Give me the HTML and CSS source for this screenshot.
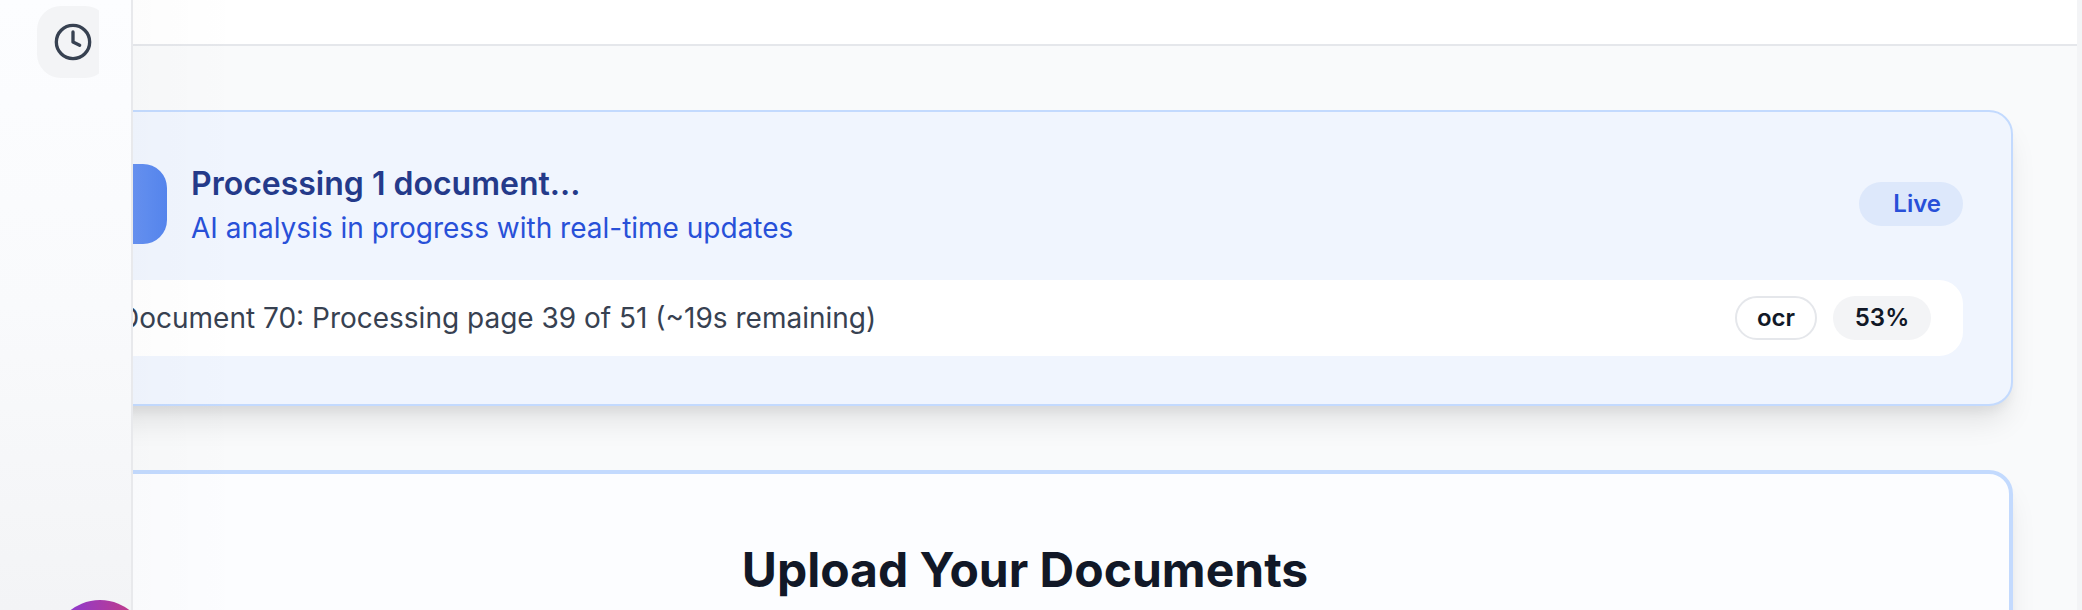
FILE: index.html
```html
<!DOCTYPE html>
<html lang="en">
<head>
<meta charset="utf-8">
<title>Upload Your Documents</title>
<link rel="stylesheet" href="styles.css">
</head>
<body>
<div class="app">
  <aside class="sidebar">
    <div class="nav-clip">
      <div class="nav-item">
        <svg class="icon" viewBox="0 0 24 24" fill="none" stroke="currentColor" stroke-width="2" stroke-linecap="round" stroke-linejoin="round"><circle cx="12" cy="12" r="10"/><polyline points="12 6 12 12 16 14"/></svg>
      </div>
    </div>
    <div class="avatar"></div>
  </aside>
  <main class="main">
    <header class="topbar"></header>
    <div class="content">
      <section class="card processing">
        <div class="status">
          <div class="status-icon"></div>
          <div class="status-text">
            <h3>Processing 1 document...</h3>
            <p>AI analysis in progress with real-time updates</p>
          </div>
          <span class="badge live">Live</span>
        </div>
        <div class="job">
          <span class="job-text">Document 70: Processing page 39 of 51 (~19s remaining)</span>
          <span class="badge outline">ocr</span>
          <span class="badge muted">53%</span>
        </div>
      </section>
      <section class="card upload">
        <h2>Upload Your Documents</h2>
      </section>
    </div>
  </main>
</div>
</body>
</html>
```

FILE: styles.css
```css
* { box-sizing: border-box; }
html, body { margin: 0; height: 100%; overflow: hidden; }
body { font-family: Inter, sans-serif; background: #f3f4f6; }
h2, h3, p { margin: 0; }

.app { display: flex; height: 610px; padding-right: 5px; }

.sidebar {
  position: relative;
  z-index: 1;
  flex: none;
  display: flex;
  flex-direction: column;
  justify-content: space-between;
  width: 133px;
  height: 610px;
  padding-top: 6px;
  border-right: 2px solid #e8e9ec;
  background: linear-gradient(#fcfdff, #f9fafc 50%, #f3f4f6) padding-box;
}
/* soft shade the sidebar casts over the page */
.sidebar::after {
  content: "";
  position: absolute;
  top: 0;
  bottom: 0;
  left: 133px;
  width: 110px;
  background: linear-gradient(90deg, rgba(0, 0, 0, .012), transparent);
}
.nav-clip { width: 62px; margin-left: 37px; overflow: hidden; }
.nav-item {
  display: flex;
  align-items: center;
  justify-content: center;
  width: 72px;
  height: 72px;
  border-radius: 24px;
  background: #f3f4f6;
  color: #374151;
}
.icon { width: 40px; height: 40px; }
.avatar {
  height: 10px;
  overflow: hidden;
}
.avatar::before {
  content: "";
  display: block;
  width: 96px;
  height: 96px;
  margin-left: 52px;
  border-radius: 50%;
  background: linear-gradient(90deg, #823ae0, #cc3c78);
}

.main { flex: 1; min-width: 0; overflow: hidden; background: #f9fafb; }
.topbar { height: 46px; background: #fff; border-bottom: 2px solid #e5e7eb; }
.content {
  display: flex;
  flex-direction: column;
  gap: 64px;
  margin-left: -160px;
  padding: 64px;
}
.card {
  border: 2px solid #c3dafe;
  border-radius: 24px;
  box-shadow: 0 20px 30px -6px rgba(0, 0, 0, .1), 0 8px 12px -4px rgba(0, 0, 0, .06);
}
.processing { padding: 48px; background: #f0f5fe; }
.status { display: flex; align-items: center; gap: 24px; height: 88px; margin-bottom: 32px; }
.status-icon {
  width: 80px;
  height: 80px;
  border-radius: 24px;
  background: linear-gradient(90deg, #7da2f5, #5585ee);
}
.status-text { flex: 1; }
.status-text h3 { font-size: 32px; line-height: 48px; font-weight: 600; color: #243a8a; }
.status-text p { font-size: 28px; line-height: 40px; color: #2850d8; }

.badge {
  display: flex;
  align-items: center;
  height: 44px;
  padding: 0 22px;
  border-radius: 22px;
  font-size: 24px;
  line-height: 32px;
  font-weight: 600;
  color: #111827;
}
.live { justify-content: flex-end; width: 104px; background: #dde8fb; color: #2850d8; }
.outline { justify-content: center; width: 82px; padding: 0; border: 2px solid #e5e7eb; }
.muted { justify-content: center; width: 98px; padding: 0; background: #f3f4f6; }

.job {
  display: flex;
  align-items: center;
  gap: 16px;
  height: 76px;
  padding: 0 32px;
  border-radius: 24px;
  background: #fff;
}
.job-text { flex: 1; font-size: 28px; line-height: 40px; color: #374151; }

.upload {
  height: 400px;
  padding: 68px 48px 0;
  border-width: 4px;
  background: #fcfdff;
}
.upload h2 { font-size: 48px; line-height: 56px; font-weight: 700; text-align: center; color: #111827; }
```
